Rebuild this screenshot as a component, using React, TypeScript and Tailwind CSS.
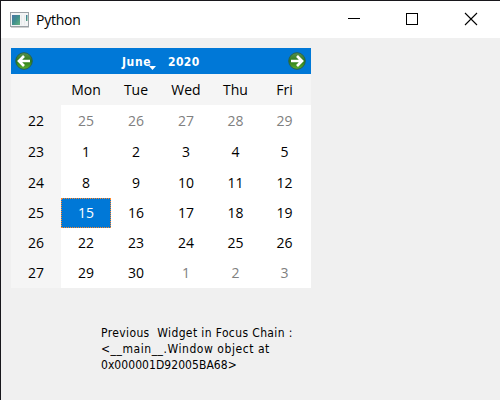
import React from "react";

const days = ["Mon", "Tue", "Wed", "Thu", "Fri"];

const weeks = [
  { week: 22, dates: [25, 26, 27, 28, 29], muted: [25, 26, 27, 28, 29] },
  { week: 23, dates: [1, 2, 3, 4, 5], muted: [] },
  { week: 24, dates: [8, 9, 10, 11, 12], muted: [] },
  { week: 25, dates: [15, 16, 17, 18, 19], muted: [] },
  { week: 26, dates: [22, 23, 24, 25, 26], muted: [] },
  { week: 27, dates: [29, 30, 1, 2, 3], muted: [1, 2, 3] },
];

const columns = "grid grid-cols-[50px_50px_50px_50px_49px_49px_2px]";

function AppIcon() {
  return (
    <svg width="20" height="16" viewBox="0 0 20 16" className="shrink-0">
      <defs>
        <linearGradient id="screen" x1="0" y1="0" x2="1" y2="1">
          <stop offset="0" stopColor="#4b74a8" />
          <stop offset="0.5" stopColor="#408f8c" />
          <stop offset="1" stopColor="#68b580" />
        </linearGradient>
      </defs>
      <rect x="0.5" y="0.5" width="18" height="14" fill="#f3f4f5" stroke="#9ba1a6" />
      <path d="M1 15.5h18" stroke="#d0d0d0" />
      <rect x="2" y="3" width="8" height="10" fill="url(#screen)" />
      <path d="M11.5 3v10M14.5 3v10" stroke="#e9ebec" />
      <rect x="16" y="3" width="1.5" height="6" fill="url(#screen)" />
    </svg>
  );
}

function ArrowButton({ next = false }: { next?: boolean }) {
  return (
    <button aria-label={next ? "Next month" : "Previous month"} className="mb-px size-[18px]">
      <svg width="18" height="18" viewBox="0 0 18 18" className={next ? "-scale-x-100" : ""}>
        <defs>
          <linearGradient id={next ? "green-next" : "green-prev"} x1="0" y1="0" x2="0" y2="1">
            <stop offset="0" stopColor="#5a9150" />
            <stop offset="0.5" stopColor="#2c7a1a" />
            <stop offset="1" stopColor="#5cae30" />
          </linearGradient>
        </defs>
        <circle cx="9" cy="9" r="8.3" fill={next ? "url(#green-next)" : "url(#green-prev)"} stroke="#285f4b" strokeWidth="0.9" />
        <path d="M9 4L4 9l5 5M4.5 9h10.5" fill="none" stroke="#fff" strokeWidth="2.7" />
      </svg>
    </button>
  );
}

function TitleBar() {
  return (
    <header className="flex h-[37px] items-center bg-white pl-[9px]">
      <AppIcon />
      <h1 className="ml-[6px] text-[14px] leading-5 tracking-[-0.25px]">Python</h1>
      <div className="ml-auto flex h-full">
        <svg width="58" height="37" viewBox="0 0 58 37" shapeRendering="crispEdges">
          <path d="M23 17.5h12" stroke="#000" />
        </svg>
        <svg width="58" height="37" viewBox="0 0 58 37" shapeRendering="crispEdges">
          <path d="M23.5 12.5h11v11h-11z" fill="none" stroke="#000" />
        </svg>
        <svg width="59" height="37" viewBox="0 0 59 37">
          <path d="M24 12l12 12M36 12L24 24" stroke="#000" strokeWidth="1.1" />
        </svg>
      </div>
    </header>
  );
}

function Calendar() {
  return (
    <section className="w-[300px] bg-white text-[14px] leading-none">
      <div className="flex h-[26px] items-center bg-[#0078d7] pl-1 pr-[5px] text-white">
        <ArrowButton />
        <div className="ml-[89px] flex whitespace-nowrap pt-[2px] font-['DejaVu_Sans_Condensed','DejaVu_Sans',sans-serif] text-[12px] font-bold leading-4">
          <span className="relative w-[46px] tracking-[0.6px]">
            June
            <svg width="7" height="4" viewBox="0 0 7 4" className="absolute left-[27px] top-[12px]">
              <path d="M0 0h7L3.5 4z" fill="#fff" />
            </svg>
          </span>
          <span className="tracking-[0.4px]">2020</span>
        </div>
        <div className="ml-auto flex">
          <ArrowButton next />
        </div>
      </div>
      <div className={`${columns} h-[31px] items-center bg-[#f5f5f5] text-center`}>
        <span />
        {days.map((day) => (
          <span key={day}>{day}</span>
        ))}
      </div>
      <div className="grid grid-rows-[31px_31px_31px_30px_30px_30px]">
        {weeks.map(({ week, dates, muted }) => (
          <div key={week} className={columns}>
            <span className="flex items-center justify-center bg-[#f5f5f5]">{week}</span>
            {dates.map((date) => {
              const selected = week === 25 && date === 15;
              return (
                <span
                  key={date}
                  className={`flex items-center justify-center ${
                    selected
                      ? "border border-dotted border-[#ff8728] bg-[#0078d7] text-white"
                      : (muted as number[]).includes(date)
                        ? "text-[#808080]"
                        : "text-black"
                  }`}
                >
                  {date}
                </span>
              );
            })}
          </div>
        ))}
      </div>
    </section>
  );
}

export default function App() {
  return (
    <main className="h-[400px] w-[500px] overflow-hidden border-l border-t border-[#18171c] bg-[#f0f0f0] font-['Open_Sans','Noto_Sans',sans-serif] text-black">
      <TitleBar />
      <div className="pl-[10px] pt-[10px]">
        <Calendar />
        <p className="ml-[90px] mt-[37px] whitespace-pre font-['DejaVu_Sans_Condensed','DejaVu_Sans',sans-serif] text-[12px] leading-4">
          <span className="block tracking-[0.38px]">{"Previous  Widget in Focus Chain :"}</span>
          <span className="block tracking-[0.55px]">{"<__main__.Window object at"}</span>
          <span className="block tracking-[0.06px]">{"0x000001D92005BA68>"}</span>
        </p>
      </div>
    </main>
  );
}
